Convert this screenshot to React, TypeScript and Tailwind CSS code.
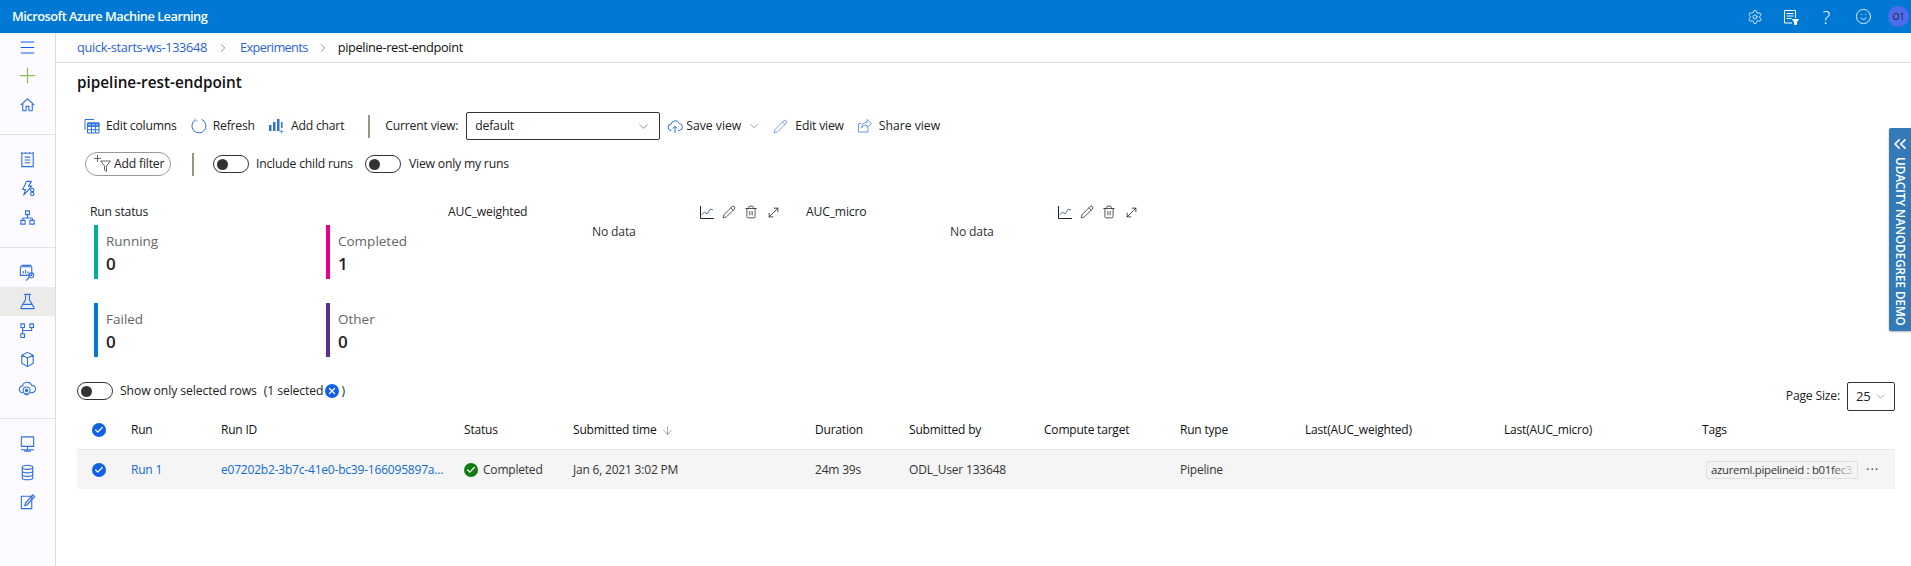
import React from 'react';
import { ChevronDown, ChevronRight, Settings, Smile, Menu, Plus, ArrowDown, Pencil, Trash2, MoveDiagonal, ChevronsLeft, X, Check } from 'lucide-react';

const SEGOE = "font-['Open_Sans','Noto_Sans',sans-serif]";
const ROW_GRID =
  'grid grid-cols-[54px_90px_243px_109px_242px_94px_135px_136px_125px_199px_198px_1fr] items-center';

interface IconProps {
  className?: string;
}

const Svg: React.FC<React.PropsWithChildren<IconProps & { size?: number }>> = ({ children, className, size = 19 }) => (
  <svg
    width={size}
    height={size}
    viewBox="0 0 20 20"
    fill="none"
    stroke="currentColor"
    strokeWidth={1.15}
    strokeLinejoin="round"
    className={className}
  >
    {children}
  </svg>
);

const HomeIcon = () => (
  <Svg>
    <path d="M3 10.5 10 4l7 6.5M5 8.8V16.5h3.5v-4.5h3v4.5H15V8.8" />
  </Svg>
);
const NotebookIcon = () => (
  <Svg>
    <path d="M4 3.5h12v14H4zM4 2v1.5M8 2v1.5M12 2v1.5M16 2v1.5M7 7.5h6M7 10.5h6M7 13.5h6" />
  </Svg>
);
const AutomlIcon = () => (
  <Svg>
    <path d="M9 2.5h5L11 7.5h3.5L6 17l2-6H5z" />
    <circle cx="15" cy="11.5" r="1.8" />
    <circle cx="15" cy="15.8" r="1.8" />
  </Svg>
);
const DesignerIcon = () => (
  <Svg>
    <path d="M8 3h4v4H8zM3 13h4.5v4H3zM12.5 13H17v4h-4.5zM10 7v3.5M5 13v-2.5h10V13" />
  </Svg>
);
const DatasetIcon = () => (
  <Svg>
    <path d="M2.5 4h12v9h-12zM4 3V2.5h10M5.5 11V8.5M8 11V7M10.5 11V9" />
    <circle cx="14" cy="13" r="2.6" />
    <path d="m12 15-3.5 3.5" />
  </Svg>
);
const FlaskIcon = () => (
  <Svg>
    <path d="M6.5 2.5h7M8 2.5V8l-5 8.5a.7.7 0 0 0 .6 1h12.8a.7.7 0 0 0 .6-1L12 8V2.5M5.5 13h9" />
  </Svg>
);
const PipelineIcon = () => (
  <Svg>
    <path d="M3 3h3.8v3.8H3zM12.5 3h3.8v3.8h-3.8zM3 13.5h3.8v3.8H3zM4.9 6.8v6.7M4.9 10h9.5V6.8" />
  </Svg>
);
const CubeIcon = () => (
  <Svg>
    <path d="m10 2.5 6 3v8.5l-6 3.5-6-3.5V5.5zM4 5.5l6 3 6-3M10 8.5v9" />
  </Svg>
);
const EndpointIcon = () => (
  <Svg>
    <path d="M5 14.5a3.5 3.5 0 0 1-.3-7 5 5 0 0 1 9.6-.8 3.8 3.8 0 0 1 .7 7.6h-2" />
    <circle cx="9" cy="12" r="3.6" />
    <circle cx="9" cy="12" r="1.2" fill="currentColor" />
    <path d="M7 16.5h4" />
  </Svg>
);
const ComputeIcon = () => (
  <Svg>
    <path d="M3.5 3h13v10h-13zM10 13v3M3 16.5h14M6.5 18h7" />
  </Svg>
);
const DatastoreIcon = () => (
  <Svg>
    <ellipse cx="10" cy="4.5" rx="5.5" ry="2.2" />
    <path d="M4.5 4.5v11c0 1.2 2.5 2.2 5.5 2.2s5.5-1 5.5-2.2v-11M4.5 8.2c0 1.2 2.5 2.2 5.5 2.2s5.5-1 5.5-2.2M4.5 11.9c0 1.2 2.5 2.2 5.5 2.2s5.5-1 5.5-2.2" />
  </Svg>
);
const LabelIcon = () => (
  <Svg>
    <path d="M3.5 4.5h11v13h-11z" />
    <path d="M7 14.5 8 11.5 15.5 3l2 1.8L10 13.3z" fill="currentColor" fillOpacity={0.25} />
  </Svg>
);

const TableIcon = () => (
  <svg width="16" height="16" viewBox="0 0 16 16" fill="none" stroke="#2b6fe0" strokeWidth={1}>
    <path d="M1 1.5h9M1 1.5V12" />
    <path d="M3.5 5h11.5v10H3.5zM3.5 8.3H15M3.5 11.7H15M7.5 5v10M11.3 5v10" />
    <path d="M3.5 5H15V8H3.5z" fill="#2b6fe0" fillOpacity={0.55} />
  </svg>
);
const RefreshIcon = () => (
  <svg width="16" height="16" viewBox="0 0 16 16" fill="none" stroke="#2b6fe0" strokeWidth={1}>
    <path d="M10.5 1.4a7 7 0 1 1-6 .4" />
    <path d="M4.2 .4v2.6h2.6" stroke="#8fb4ee" />
  </svg>
);
const AddChartIcon = () => (
  <svg width="16" height="16" viewBox="0 0 16 16" fill="#2b6fe0" stroke="none">
    <rect x="1" y="7" width="2.5" height="6" />
    <rect x="5" y="4" width="2.5" height="9" />
    <rect x="9" y="1" width="2.5" height="12" />
    <rect x="13" y="4" width="1.5" height="6" />
    <path d="M13 11.5h1v1.5h1.5v1H14v1.5h-1V14h-1.5v-1H13z" fill="#6f9ce8" />
  </svg>
);
const FilterAddIcon = () => (
  <svg width="20" height="18" viewBox="0 0 20 18" fill="none" stroke="#555" strokeWidth={0.9}>
    <path d="M4.5 0v7M1 3.5h7" />
    <path d="M7.5 6h10l-4 5v5.5l-2-1.5v-4z" />
  </svg>
);
const SaveViewIcon = () => (
  <svg width="16" height="16" viewBox="0 0 16 16" fill="none" stroke="#2b6fe0" strokeWidth={1}>
    <path d="M4.5 12.5a3.2 3.2 0 0 1-.3-6.4 4.2 4.2 0 0 1 8-.7 3.6 3.6 0 0 1 .3 7.1h-1.5" />
    <path d="M8 15V8.5M5.8 10.5 8 8.3l2.2 2.2" />
  </svg>
);
const ShareIcon = () => (
  <svg width="16" height="16" viewBox="0 0 16 16" fill="none" stroke="#6f9ce8" strokeWidth={1}>
    <path d="M11 9.5V14H1.5V5.5h3" />
    <path d="M10 1.5 14.5 5.5 10 9.5V7c-3 0-4.5 1-5.5 3 0-3.5 2-5.5 5.5-5.8z" />
  </svg>
);
const LineChartIcon = () => (
  <svg width="14" height="14" viewBox="0 0 14 14" fill="none" stroke="#222" strokeWidth={1}>
    <path d="M.5 1v12.5H14" />
    <path d="m1.5 10 3-3 2.5 2 3.5-5 2.5 1" stroke="#4d6f9f" />
  </svg>
);
const ReportIcon = () => (
  <svg width="16" height="16" viewBox="0 0 16 16" fill="none" stroke="white" strokeWidth={1}>
    <path d="M9 14H1.5V1.5h11V9M3.5 4.5h7M3.5 7h7M3.5 9.5h5" />
    <path d="M9.5 10.5h6l-2 2.5v2.5h-2V13z" fill="white" />
  </svg>
);

const CheckCircle = ({ className = 'bg-[#0f62e6]' }: { className?: string }) => (
  <span className={`flex h-[14px] w-[14px] items-center justify-center rounded-full ${className}`}>
    <Check size={10} strokeWidth={3} className="text-white" />
  </span>
);

const Toggle = () => (
  <span className="flex h-[18px] w-[36px] shrink-0 items-center rounded-full border border-[#333] pl-[3px]">
    <span className="h-[11px] w-[11px] rounded-full bg-[#333]" />
  </span>
);

const Divider = () => <span className="h-[23px] w-[2px] border-l border-r border-l-[#c18f33] border-r-[#6a9fd4]" />;

const MetricCard = ({ label, value, color }: { label: string; value: string; color: string }) => (
  <div className={`h-[54px] border-l-4 pl-2 ${color}`}>
    <div className="pt-[6px] text-[13.5px] leading-[20px] text-[#666]">{label}</div>
    <div className="pt-[1px] text-[17px] font-semibold leading-[24px] text-[#222]">{value}</div>
  </div>
);

const ChartPanel = ({ title }: { title: string }) => (
  <div className="w-[358px] shrink-0">
    <div className="flex h-[16px] w-[333px] items-center justify-between">
      <span className="text-[12.2px] tracking-[-0.2px] text-[#222]">{title}</span>
      <div className="flex items-center gap-2 text-[#222]">
        <LineChartIcon />
        <Pencil size={14} strokeWidth={1.3} />
        <Trash2 size={14} strokeWidth={1.3} />
        <MoveDiagonal size={15} strokeWidth={1.3} />
      </div>
    </div>
    <div className="mt-[3px] pl-[144px] text-[12.2px] tracking-[-0.2px] text-[#333]">No data</div>
  </div>
);

const navGroups = [
  [<NotebookIcon key="a" />, <AutomlIcon key="b" />, <DesignerIcon key="c" />],
  [<DatasetIcon key="a" />, <FlaskIcon key="b" />, <PipelineIcon key="c" />, <CubeIcon key="d" />, <EndpointIcon key="e" />],
  [<ComputeIcon key="a" />, <DatastoreIcon key="b" />, <LabelIcon key="c" />],
];

const columns = [
  'Run ID',
  'Status',
  'Submitted time',
  'Duration',
  'Submitted by',
  'Compute target',
  'Run type',
  'Last(AUC_weighted)',
  'Last(AUC_micro)',
  'Tags',
];

export default function App() {
  return (
    <div className={`relative flex h-[566px] w-full flex-col overflow-hidden bg-white text-[#222] ${SEGOE}`}>
      <header className="flex h-[33px] shrink-0 items-center justify-between bg-[#0078d4] pl-3 pr-[2px] text-white">
        <span className="text-[12.8px] font-semibold tracking-[-0.5px]">Microsoft Azure Machine Learning</span>
        <div className="flex items-center">
          <Settings size={16} strokeWidth={1.2} className="mr-[20px]" />
          <ReportIcon />
          <span className="ml-[23px] text-[18px] font-light leading-none">?</span>
          <Smile size={17} strokeWidth={1.2} className="ml-[25px]" />
          <span className="ml-[16px] flex h-[21px] w-[21px] items-center justify-center rounded-full bg-[#4f6bed] text-[9px] text-[#1b1a19]">
            O1
          </span>
        </div>
      </header>

      <div className="flex min-h-0 flex-1">
        <aside className="w-[56px] shrink-0 border-r border-[#ddd] bg-[#fdfbff] text-[#2b6fe0]">
          <div className="border-b border-[#e3e3e3] pb-[15px]">
            <div className="flex h-[28px] items-center justify-center">
              <Menu size={19} strokeWidth={1.3} className="text-[#0f62e6]" />
            </div>
            <div className="flex h-[29px] items-center justify-center">
              <Plus size={25} strokeWidth={1.2} className="text-[#8cc152]" />
            </div>
            <div className="flex h-[29px] items-center justify-center">
              <HomeIcon />
            </div>
          </div>
          {navGroups.map((items, g) => (
            <div key={g} className={`pb-[15px] pt-[10px] ${g < 2 ? 'border-b border-[#e3e3e3]' : ''}`}>
              {items.map((icon, i) => (
                <div
                  key={i}
                  className={`flex h-[29px] items-center justify-center ${g === 1 && i === 1 ? 'bg-[#edebe9]' : ''}`}
                >
                  {icon}
                </div>
              ))}
            </div>
          ))}
        </aside>

        <main className="min-w-0 flex-1">
          <nav className="flex h-[30px] items-center border-b border-[#ddd] pl-[21px] text-[12.8px] tracking-[-0.35px]">
            <span className="text-[#2a62d8]">quick-starts-ws-133648</span>
            <ChevronRight size={14} strokeWidth={1.2} className="ml-[9px] mr-[10px] text-[#666]" />
            <span className="tracking-[-0.65px] text-[#2a62d8]">Experiments</span>
            <ChevronRight size={14} strokeWidth={1.2} className="mx-[8px] text-[#666]" />
            <span className="text-[#111]">pipeline-rest-endpoint</span>
          </nav>

          <div className="pl-[21px] pr-[16px]">
            <h1 className="pt-[8px] text-[15.3px] font-semibold leading-[22px] text-[#111]">pipeline-rest-endpoint</h1>

            <div className="mt-[19px] flex h-[28px] items-center pl-[7px] text-[12.2px] tracking-[-0.2px]">
              <TableIcon />
              <span className="ml-[6px]">Edit columns</span>
              <span className="ml-[14px]"><RefreshIcon /></span>
              <span className="ml-[6px]">Refresh</span>
              <span className="ml-[13px]"><AddChartIcon /></span>
              <span className="ml-[7px]">Add chart</span>
              <span className="ml-[24px] flex"><Divider /></span>
              <span className="ml-[15px]">Current view:</span>
              <div className="ml-[8px] flex h-[28px] w-[194px] items-center justify-between rounded-[2px] border border-[#333] pl-2 pr-2">
                <span>default</span>
                <ChevronDown size={15} strokeWidth={1} className="text-[#555]" />
              </div>
              <span className="ml-[7px]"><SaveViewIcon /></span>
              <span className="ml-[3px] tracking-[0px]">Save view</span>
              <ChevronDown size={14} strokeWidth={1} className="ml-[6px] text-[#666]" />
              <Pencil size={15} strokeWidth={1} className="ml-[12px] text-[#2b6fe0]" />
              <span className="ml-[7px]">Edit view</span>
              <span className="ml-[13px]"><ShareIcon /></span>
              <span className="ml-[6px] tracking-[0px]">Share view</span>
            </div>

            <div className="mt-[12px] flex h-[24px] items-center pl-[8px] text-[12.2px] tracking-[-0.2px]">
              <span className="flex h-[24px] w-[86px] items-center rounded-full border border-[#999] pl-[7px]">
                <FilterAddIcon />
                <span className="ml-[1px]">Add filter</span>
              </span>
              <span className="ml-[21px] flex"><Divider /></span>
              <span className="ml-[19px]"><Toggle /></span>
              <span className="ml-[7px]">Include child runs</span>
              <span className="ml-[12px]"><Toggle /></span>
              <span className="ml-[8px]">View only my runs</span>
            </div>

            <div className="mt-[28px] flex pl-[13px]">
              <div className="w-[358px] shrink-0">
                <div className="h-[16px] text-[12.2px] leading-[16px] tracking-[-0.2px]">Run status</div>
                <div className="mt-[5px] grid grid-cols-[232px_1fr] gap-y-[24px] pl-[4px]">
                  <MetricCard label="Running" value="0" color="border-[#00b294]" />
                  <MetricCard label="Completed" value="1" color="border-[#e3008c]" />
                  <MetricCard label="Failed" value="0" color="border-[#0078d4]" />
                  <MetricCard label="Other" value="0" color="border-[#5c2d91]" />
                </div>
              </div>
              <ChartPanel title="AUC_weighted" />
              <ChartPanel title="AUC_micro" />
            </div>

            <div className="mt-[25px] flex items-start justify-between">
              <div className="flex h-[18px] items-center text-[12.2px] tracking-[-0.1px]">
                <Toggle />
                <span className="ml-[7px]">Show only selected rows</span>
                <span className="ml-[7px]">(1 selected</span>
                <span className="ml-[2px] flex h-[14px] w-[14px] items-center justify-center rounded-full bg-[#0f62e6]">
                  <X size={10} strokeWidth={3} className="text-white" />
                </span>
                <span className="ml-[2px]">)</span>
              </div>
              <div className="flex h-[29px] items-center text-[12.2px] tracking-[-0.2px]">
                <span>Page Size:</span>
                <div className="ml-[7px] flex h-[29px] w-[48px] items-center justify-between rounded-[2px] border border-[#333] pl-2 pr-[7px] text-[13px]">
                  <span>25</span>
                  <ChevronDown size={13} strokeWidth={1} className="text-[#666]" />
                </div>
              </div>
            </div>

            <div className={`${ROW_GRID} h-[39px] border-b border-[#e5e5e5] text-[12px] font-medium tracking-[-0.2px] text-[#111]`}>
              <span className="pl-[15px]"><CheckCircle /></span>
              <span>Run</span>
              {columns.map((c) => (
                <span key={c} className="flex items-center whitespace-nowrap">
                  {c}
                  {c === 'Submitted time' && <ArrowDown size={13} strokeWidth={1} className="ml-[4px] text-[#555]" />}
                </span>
              ))}
            </div>

            <div className={`${ROW_GRID} h-[39px] bg-[#f5f5f5] text-[12px] tracking-[-0.2px] text-[#333]`}>
              <span className="pl-[15px]"><CheckCircle /></span>
              <span className="text-[#0f6cd0]">Run 1</span>
              <span className="truncate pr-[2px] text-[#0f6cd0]">e07202b2-3b7c-41e0-bc39-166095897a...</span>
              <span className="flex items-center gap-[5px]">
                <CheckCircle className="bg-[#107c10]" />
                Completed
              </span>
              <span>Jan 6, 2021 3:02 PM</span>
              <span>24m 39s</span>
              <span>ODL_User 133648</span>
              <span />
              <span>Pipeline</span>
              <span />
              <span />
              <div className="flex items-center pl-[4px]">
                <span className="relative h-[18px] w-[152px] whitespace-nowrap rounded-[2px] border border-[#e0e0e0] bg-[#f3f3f3] pl-[4px] text-[11.4px] leading-[16px] tracking-[-0.3px]">
                  azureml.pipelineid : b01fec3
                  <span className="absolute inset-y-0 right-0 w-[26px] bg-gradient-to-r from-transparent to-[#f5f5f5]" />
                </span>
                <span className="ml-[8px] text-[13px] leading-none tracking-[1px]">···</span>
              </div>
            </div>
          </div>
        </main>
      </div>

      <div className="absolute right-0 top-[128px] flex h-[203px] w-[22px] flex-col items-center rounded-l-[2px] bg-[#337ab7] pt-[6px] text-white shadow-[0_1px_2px_rgba(0,0,0,0.3)]">
        <ChevronsLeft size={20} strokeWidth={2} />
        <span className="mt-[3px] whitespace-nowrap text-[11.7px] font-semibold tracking-[-0.05px] [writing-mode:vertical-rl]">
          UDACITY NANODEGREE DEMO
        </span>
      </div>
    </div>
  );
}
